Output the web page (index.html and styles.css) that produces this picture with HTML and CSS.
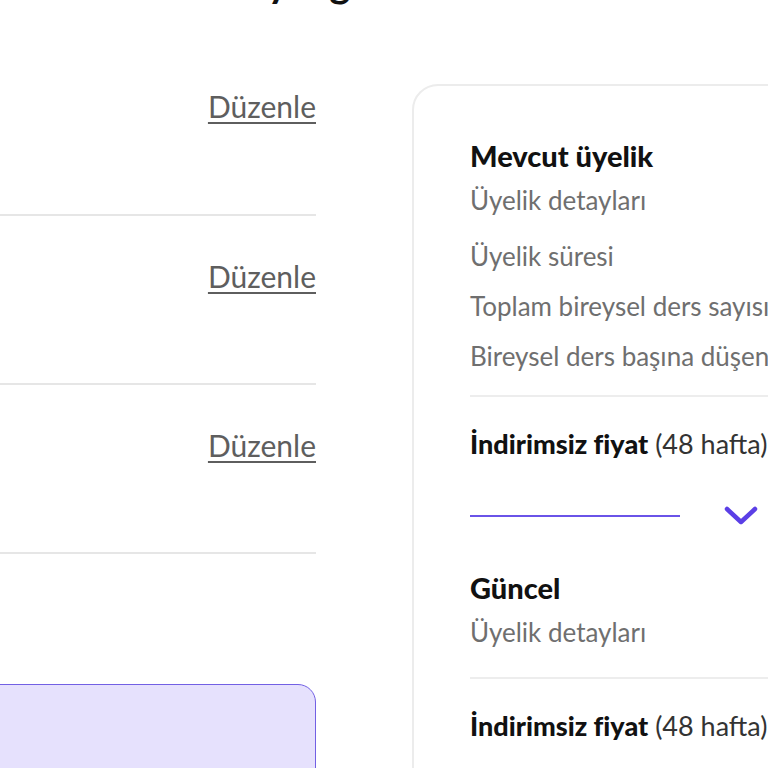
FILE: index.html
```
<!DOCTYPE html>
<html lang="tr">
  <head>
    <meta charset="utf-8" />
    <title>Üyeliğini düzenle</title>
    <link rel="stylesheet" href="styles.css">
  </head>
  <body>
    <h1 class="page-title">Üyeliğini düzenle</h1>

    <div class="page">
      <div class="settings">
        <div class="setting-row">
          <a href="#" class="edit-link">Düzenle</a>
        </div>
        <div class="setting-row">
          <a href="#" class="edit-link">Düzenle</a>
        </div>
        <div class="setting-row">
          <a href="#" class="edit-link">Düzenle</a>
        </div>
        <div class="setting-row empty"></div>
        <div class="notice-box"></div>
      </div>

      <div class="summary-card">
        <div class="plan-block">
          <h2 class="plan-title">Mevcut üyelik</h2>
          <p class="plan-sub">Üyelik detayları</p>
          <ul class="plan-lines">
            <li>Üyelik süresi</li>
            <li>Toplam bireysel ders sayısı</li>
            <li>Bireysel ders başına düşen ücret</li>
          </ul>
        </div>
        <div class="price-line">
          <b>İndirimsiz fiyat</b> (48 hafta)
        </div>

        <div class="toggle-divider">
          <span class="toggle-line"></span>
          <svg class="chevron" width="34" height="22" viewBox="0 0 34 22">
            <path d="M3 4 L17 17 L31 4" fill="none" stroke="#5b3fe6" stroke-width="4.5" stroke-linecap="round" stroke-linejoin="round" />
          </svg>
          <span class="toggle-line"></span>
        </div>

        <div class="plan-block current">
          <h2 class="plan-title">Güncel</h2>
          <p class="plan-sub">Üyelik detayları</p>
        </div>
        <div class="price-line">
          <b>İndirimsiz fiyat</b> (48 hafta)
        </div>
      </div>
    </div>
  </body>
</html>
```

FILE: styles.css
```
body {
  margin: 0;
  width: 768px;
  height: 768px;
  overflow: hidden;
  background: #ffffff;
  font-family: Lato, "Noto Sans", sans-serif;
  color: #111111;
}

.page-title {
  margin: -42px 0 0 0;
  padding-left: 238px;
  font-size: 40px;
  line-height: 48px;
  font-weight: 700;
  white-space: nowrap;
}

.page {
  display: flex;
  align-items: flex-start;
  margin-top: 34px;
}

/* left column, starts off the left edge */
.settings {
  width: 400px;
  margin-left: -84px;
  flex-shrink: 0;
}

.setting-row {
  height: 167px;
  border-bottom: 2px solid #e6e6e6;
  display: flex;
  justify-content: flex-end;
  align-items: flex-start;
}

.setting-row:first-child {
  height: 174px;
}

.setting-row.empty {
  height: 130px;
  border-bottom: none;
}

.edit-link {
  margin-top: 42px;
  font-size: 30px;
  line-height: 36px;
  color: #5e5e5e;
  text-decoration: underline;
  text-decoration-thickness: 2px;
  text-underline-offset: 4px;
}

.setting-row:first-child .edit-link {
  margin-top: 48px;
}

.notice-box {
  height: 120px;
  background: #e6e1fd;
  border: 1.5px solid #7260e4;
  border-radius: 18px;
}

/* right card */
.summary-card {
  margin-left: 96px;
  margin-top: 44px;
  width: 560px;
  flex-shrink: 0;
  border: 2px solid #ececec;
  border-radius: 26px;
  padding: 52px 0 80px 56px;
}

.plan-title {
  margin: 0;
  font-size: 29px;
  line-height: 36px;
  font-weight: 900;
  color: #111111;
}

.plan-sub {
  margin: 9px 0 0 0;
  font-size: 26px;
  line-height: 34px;
  color: #6f6f6f;
}

.plan-lines {
  list-style: none;
  margin: 22px 0 0 0;
  padding: 0;
}

.plan-lines li {
  font-size: 26px;
  line-height: 34px;
  color: #6f6f6f;
  margin-bottom: 16px;
  white-space: nowrap;
}

.plan-lines li:last-child {
  margin-bottom: 0;
}

.plan-block.current {
  padding-bottom: 6px;
}

.price-line {
  margin-top: 22px;
  border-top: 2px solid #ededed;
  padding-top: 30px;
  font-size: 27px;
  line-height: 34px;
  color: #333333;
  white-space: nowrap;
}

.price-line b {
  font-weight: 900;
  color: #111111;
}

.toggle-divider {
  display: flex;
  align-items: center;
  gap: 44px;
  margin: 44px 0 43px 0;
}

.toggle-line {
  width: 210px;
  height: 2px;
  background: #6a53e8;
}

.chevron {
  display: block;
  flex-shrink: 0;
}
```
